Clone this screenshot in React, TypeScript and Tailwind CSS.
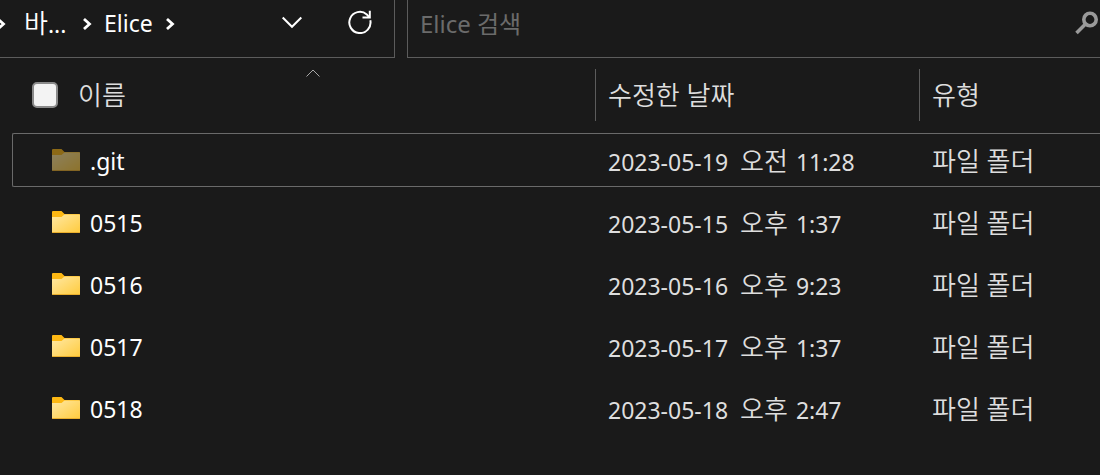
import type { ReactNode } from "react";

const files = [
  { name: ".git", date: "2023-05-19", half: "오전", time: "11:28", hidden: true },
  { name: "0515", date: "2023-05-15", half: "오후", time: "1:37" },
  { name: "0516", date: "2023-05-16", half: "오후", time: "9:23" },
  { name: "0517", date: "2023-05-17", half: "오후", time: "1:37" },
  { name: "0518", date: "2023-05-18", half: "오후", time: "2:47" },
];

// Hangul is set a little larger than the Latin text beside it
function Ko({ children }: { children: ReactNode }) {
  return (
    <span lang="ko" className="text-[26px] font-[350]">
      {children}
    </span>
  );
}

function Folder({ dim }: { dim?: boolean }) {
  return (
    <svg
      width="28"
      height="22"
      viewBox="0 0 28 22"
      className={dim ? "mb-1 shrink-0 opacity-50" : "mb-1 shrink-0"}
      aria-hidden="true"
    >
      <defs>
        <linearGradient id="folder" x1="0" y1="0" x2="1" y2="1">
          <stop offset="0" stopColor="#ffe8a3" />
          <stop offset="1" stopColor="#ffcb3d" />
        </linearGradient>
      </defs>
      <path d="M0 1a1 1 0 0 1 1-1h8.500l3 3H27a1 1 0 0 1 1 1v6H0z" fill="#fdb813" />
      <path d="M0 6h9.500l3-2.500H28V21a1 1 0 0 1-1 1H1a1 1 0 0 1-1-1z" fill="url(#folder)" />
      <path d="M0 21h28a1 1 0 0 1-1 1H1a1 1 0 0 1-1-1z" fill="#e9ae2c" />
    </svg>
  );
}

function Chevron() {
  return (
    <svg width="10" height="14" viewBox="0 0 10 14" className="shrink-0" aria-hidden="true">
      <path d="M2 2l5.500 5L2 12" fill="none" stroke="#fff" strokeWidth="2.800" />
    </svg>
  );
}

export default function App() {
  return (
    <div className="min-h-screen overflow-hidden bg-[#1a1a1a] font-['Noto_Sans','Noto_Sans_CJK_KR',sans-serif] text-[23px] text-white">
      <header className="flex h-[58px] gap-3">
        <nav className="flex w-[395px] shrink-0 border-r border-b border-[#5c5c5c] pb-2.5">
          <div className="-ml-1 flex grow items-center">
            <Chevron />
            <a href="#" className="ml-[18px] w-[46px] whitespace-nowrap">
              <Ko>바</Ko>...
            </a>
            <span className="ml-3">
              <Chevron />
            </span>
            <a href="#" className="ml-3">
              Elice
            </a>
            <span className="ml-3">
              <Chevron />
            </span>
          </div>
          <div className="flex items-center gap-11 pr-[22px] pb-1">
            <button type="button" aria-label="이전 위치">
              <svg width="24" height="24" viewBox="0 0 24 24" fill="none" stroke="#fff" strokeWidth="2">
                <path d="M2.700 7.500l9.300 9.300 9.300-9.300" />
              </svg>
            </button>
            <button type="button" aria-label="새로 고침">
              <svg width="24" height="24" viewBox="0 0 24 24" fill="none" stroke="#fff" strokeWidth="2">
                <path d="M22.300 10.300A10.600 10.600 0 1 1 18.800 4.400L21 7" />
                <path d="M21.800 .8v6.700h-7.300" />
              </svg>
            </button>
          </div>
        </nav>
        <label className="flex grow items-center border-b border-l border-[#5c5c5c] pb-2.5 pl-3">
          <input
            type="search"
            aria-label="Elice 검색"
            placeholder="Elice 검색"
            className="min-w-0 grow bg-transparent text-2xl outline-none placeholder:text-[#6b6b6b]"
          />
          <svg width="26" height="26" viewBox="0 0 26 26" fill="none" stroke="#9a9a9a" aria-hidden="true">
            <circle cx="16" cy="8.500" r="6.200" strokeWidth="3.600" />
            <path d="M11.500 13L2.500 22" strokeWidth="3.600" />
          </svg>
        </label>
      </header>

      <main className="pt-[3px] pl-3">
        <table className="w-full table-fixed border-separate border-spacing-x-0 border-spacing-y-2 text-left whitespace-nowrap">
          <colgroup>
            <col className="w-[584px]" />
            <col className="w-[324px]" />
            <col />
          </colgroup>
          <thead className="text-[#dedede]">
            <tr className="h-[56px] align-top">
              <th className="relative p-0 font-normal">
                <svg
                  width="14"
                  height="8"
                  viewBox="0 0 14 8"
                  className="absolute top-0 left-[294px]"
                  fill="none"
                  stroke="#a8a8a8"
                  aria-hidden="true"
                >
                  <path d="M.5 7.500L7 1l6.500 6.500" />
                </svg>
                <div className="flex h-[52px] items-center gap-5 border-r border-[#5c5c5c] pl-5">
                  <input
                    type="checkbox"
                    aria-label="모두 선택"
                    className="size-[26px] appearance-none rounded-[5px] border-2 border-[#8a8a8a] bg-[#f3f3f3]"
                  />
                  <Ko>이름</Ko>
                </div>
              </th>
              <th className="p-0 font-normal">
                <div className="flex h-[52px] items-center border-r border-[#5c5c5c] pl-3">
                  <Ko>수정한 날짜</Ko>
                </div>
              </th>
              <th className="p-0 font-normal">
                <div className="flex h-[52px] items-center pl-3">
                  <Ko>유형</Ko>
                </div>
              </th>
            </tr>
          </thead>
          <tbody className="text-[#dedede]">
            {files.map((file) => {
              const edge = file.hidden ? "border-[#6a6a6a]" : "border-transparent";
              return (
                <tr key={file.name} className="h-[54px]">
                  <td className={`rounded-l-[2px] border-y border-l p-0 pt-[3px] pl-[39px] text-white ${edge}`}>
                    <div className="flex items-center gap-2.5">
                      <Folder dim={file.hidden} />
                      {file.name}
                    </div>
                  </td>
                  <td className={`border-y p-0 pt-0.5 pl-3 ${edge}`}>
                    {file.date}{" "}
                    <span className="mr-0.5 ml-1.5">
                      <Ko>{file.half}</Ko>
                    </span>{" "}
                    {file.time}
                  </td>
                  <td className={`border-y p-0 pt-0.5 pl-3 ${edge}`}>
                    <Ko>파일 폴더</Ko>
                  </td>
                </tr>
              );
            })}
          </tbody>
        </table>
      </main>
    </div>
  );
}
